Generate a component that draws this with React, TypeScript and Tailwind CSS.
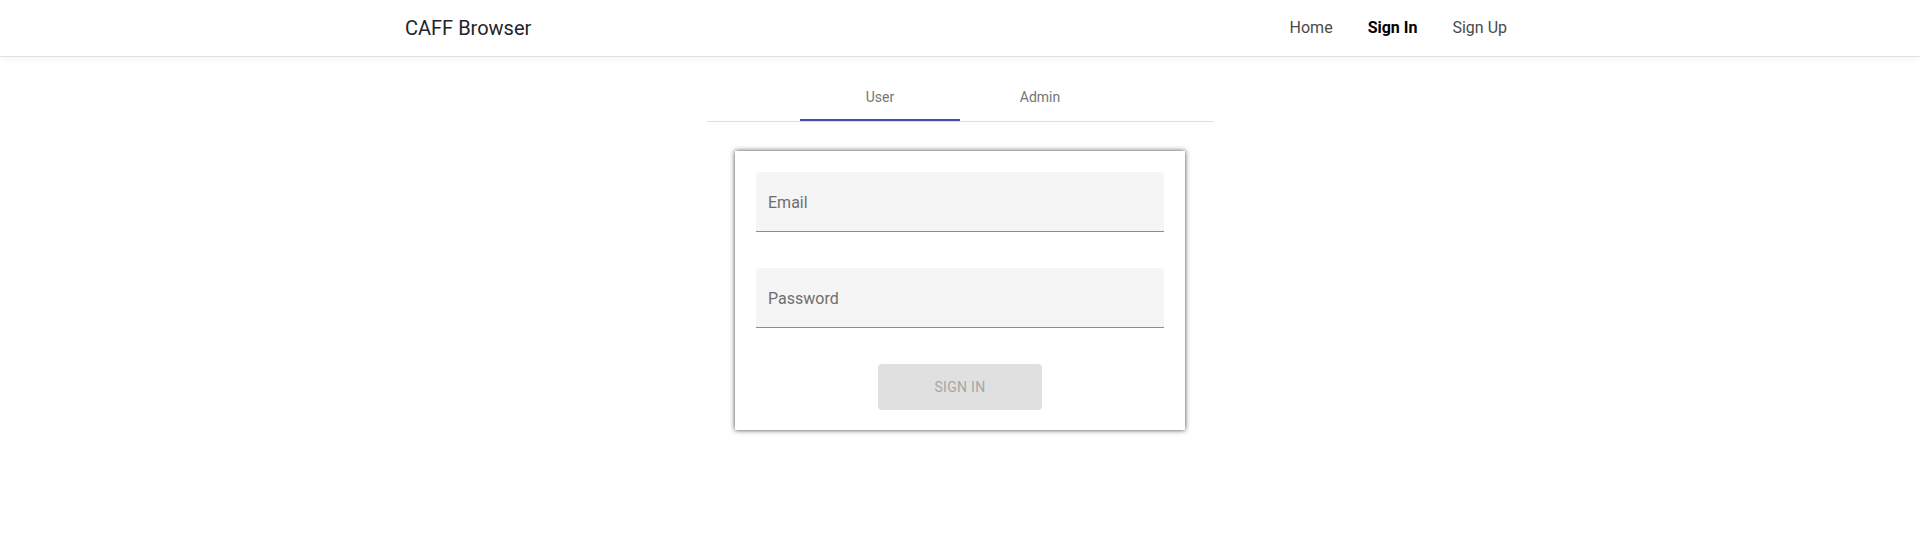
import { useState } from "react";

const NavLink = ({ label, active }: { label: string; active?: boolean }) => (
  <a
    href="#"
    className={
      active
        ? "text-[16px] font-bold text-black"
        : "text-[16px] text-[#4a4a4a] hover:text-black"
    }
  >
    {label}
  </a>
);

const Field = ({ label, type }: { label: string; type: string }) => (
  <div className="mb-9 flex h-[60px] items-center rounded-t-[4px] border-b border-[#8c8c8c] bg-[#f5f5f5] px-3 pt-[2px]">
    <input
      type={type}
      placeholder={label}
      className="w-full bg-transparent text-[16px] text-[#333] outline-none placeholder:text-[#6e6e6e]"
    />
  </div>
);

const App = () => {
  const [tab, setTab] = useState<"user" | "admin">("user");

  return (
    <div className="min-h-screen bg-white font-['Roboto',sans-serif]">
      <header className="h-[57px] border-b border-[#dee2e6] bg-white shadow-[0_3px_10px_rgba(0,0,0,0.04)]">
        <div className="mx-auto flex h-14 w-[1110px] items-center justify-between">
          <span className="text-[20px] text-[#212529]">CAFF Browser</span>
          <nav className="flex items-center gap-[35px] pr-2">
            <NavLink label="Home" />
            <NavLink label="Sign In" active />
            <NavLink label="Sign Up" />
          </nav>
        </div>
      </header>

      <div className="mx-auto mt-4 flex w-[507px] justify-center border-b border-[#e0e0e0]">
        {(["user", "admin"] as const).map((t) => (
          <button
            key={t}
            onClick={() => setTab(t)}
            className="relative flex h-12 w-40 items-center justify-center text-[14px] text-[#757575]"
          >
            {t === "user" ? "User" : "Admin"}
            {tab === t && (
              <span className="absolute bottom-0 left-0 h-[2px] w-full bg-[#3f51b5]" />
            )}
          </button>
        ))}
      </div>

      <div className="mx-auto mt-[29px] w-[450px] bg-white px-[21px] pt-[21px] pb-5 shadow-[0_0_5px_rgba(0,0,0,0.75)]">
        <Field label="Email" type="email" />
        <Field label="Password" type="password" />
        <button
          disabled
          className="mx-auto flex h-[46px] w-[164px] items-center justify-center rounded-[4px] bg-[#e0e0e0] text-[14px] tracking-[0.3px] text-[#a6a6a6]"
        >
          SIGN IN
        </button>
      </div>
    </div>
  );
};

export default App;
